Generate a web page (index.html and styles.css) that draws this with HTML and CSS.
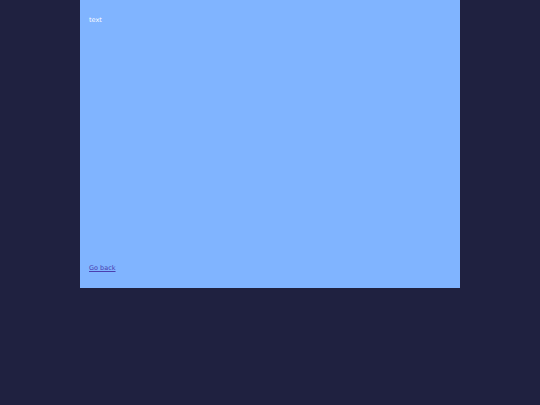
FILE: index.html
```html
<!DOCTYPE html>
<html>
<head>
<meta charset="utf-8">
<link rel="stylesheet" href="styles.css">
</head>
<body>
<div class="panel">
  <div class="content">text</div>
  <a class="back" href="#">Go back</a>
</div>
</body>
</html>
```

FILE: styles.css
```css
html, body {
  margin: 0;
  padding: 0;
  background: #1f2140;
  font-family: "DejaVu Sans", sans-serif;
  font-size: 6.5px;
  line-height: 8px;
}
.panel {
  width: 380px;
  height: 288px;
  margin: 0 auto;
  background: #80b4ff;
  box-sizing: border-box;
  padding: 16px 9px 16px 9px;
  display: flex;
  flex-direction: column;
  justify-content: space-between;
  align-items: flex-start;
}
.content {
  color: #ffffff;
}
.back {
  color: #4b3fb0;
}
```
